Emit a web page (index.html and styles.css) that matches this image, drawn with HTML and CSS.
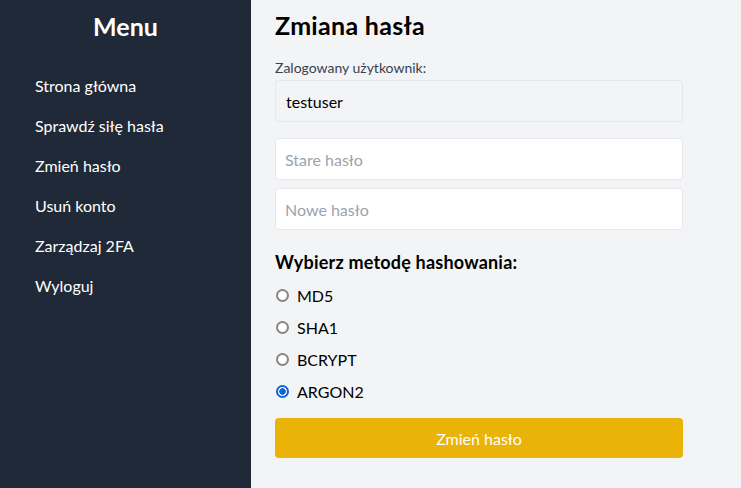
FILE: index.html
```html
<!DOCTYPE html>
<html lang="pl">
<head>
<meta charset="utf-8">
<title>Zmiana hasła</title>
<link rel="stylesheet" href="styles.css">
</head>
<body>
<div class="layout">
  <aside class="sidebar">
    <h2 class="sidebar-title">Menu</h2>
    <nav class="nav">
      <a href="#" class="nav-link">Strona główna</a>
      <a href="#" class="nav-link">Sprawdź siłę hasła</a>
      <a href="#" class="nav-link">Zmień hasło</a>
      <a href="#" class="nav-link">Usuń konto</a>
      <a href="#" class="nav-link">Zarządzaj 2FA</a>
      <a href="#" class="nav-link">Wyloguj</a>
    </nav>
  </aside>
  <main class="main">
    <h1 class="title">Zmiana hasła</h1>
    <form class="form">
      <label class="field-label">Zalogowany użytkownik:</label>
      <div class="readonly">testuser</div>
      <input class="input first" type="password" placeholder="Stare hasło">
      <input class="input" type="password" placeholder="Nowe hasło">
      <h3 class="section-title">Wybierz metodę hashowania:</h3>
      <div class="radios">
        <label class="radio"><input type="radio" name="m"><span>MD5</span></label>
        <label class="radio"><input type="radio" name="m"><span>SHA1</span></label>
        <label class="radio"><input type="radio" name="m"><span>BCRYPT</span></label>
        <label class="radio"><input type="radio" name="m" checked><span>ARGON2</span></label>
      </div>
      <button type="button" class="btn">Zmień hasło</button>
    </form>
  </main>
</div>
</body>
</html>
```

FILE: styles.css
```css
* { box-sizing: border-box; }
html, body {
  margin: 0;
  height: 100%;
}
body {
  font-family: "Lato", "Noto Sans", sans-serif;
  background: #f3f4f6;
  color: #111827;
}
.layout {
  display: flex;
  min-height: 100vh;
}
.sidebar {
  width: 251px;
  flex-shrink: 0;
  background: #1f2937;
  color: #ffffff;
  padding: 10px 0 0 0;
}
.sidebar-title {
  margin: 0;
  text-align: center;
  font-size: 25px;
  line-height: 32px;
  font-weight: 700;
}
.nav {
  display: flex;
  flex-direction: column;
  padding: 24px 0 0 35px;
}
.nav-link {
  color: #ffffff;
  text-decoration: none;
  font-size: 16px;
  line-height: 24px;
  padding: 8px 0;
}
.main {
  flex: 1;
  padding: 9px 24px 0 24px;
}
.title {
  margin: 0;
  font-size: 25px;
  line-height: 32px;
  font-weight: 700;
  letter-spacing: 0.3px;
  color: #000;
}
.form {
  width: 408px;
  display: flex;
  flex-direction: column;
  padding-top: 17px;
}
.field-label {
  font-size: 14px;
  line-height: 20px;
  color: #374151;
  margin-bottom: 2px;
}
.readonly {
  height: 42px;
  background: #f3f4f6;
  border: 1px solid #e5e7eb;
  border-radius: 4px;
  padding: 0 10px;
  display: flex;
  align-items: center;
  font-size: 16px;
  color: #000;
}
.input {
  height: 42px;
  background: #ffffff;
  border: 1px solid #e5e7eb;
  border-radius: 4px;
  padding: 0 9px;
  font-family: inherit;
  font-size: 16px;
  color: #111827;
  margin-top: 8px;
  outline: none;
}
.input.first { margin-top: 16px; }
.input::placeholder { color: #9ca3af; }
.section-title {
  margin: 18px 0 0 0;
  font-size: 18px;
  line-height: 28px;
  font-weight: 700;
  letter-spacing: 0.2px;
  color: #000;
}
.radios {
  display: flex;
  flex-direction: column;
  gap: 8px;
  margin-top: 7px;
}
.radio {
  display: flex;
  align-items: center;
  height: 24px;
  font-size: 16px;
  color: #000;
}
.radio input {
  appearance: none;
  -webkit-appearance: none;
  margin: 0 8px 0 1px;
  width: 13px;
  height: 13px;
  border: 2px solid #858585;
  border-radius: 50%;
  background: #ffffff;
  flex-shrink: 0;
}
.radio input:checked {
  border-color: #0b64d8;
  background: radial-gradient(circle, #0b64d8 0 3px, #ffffff 3.5px);
}
.btn {
  margin-top: 15px;
  height: 40px;
  background: #eab308;
  color: #ffffff;
  border: none;
  border-radius: 4px;
  font-family: inherit;
  font-size: 16px;
}
```
